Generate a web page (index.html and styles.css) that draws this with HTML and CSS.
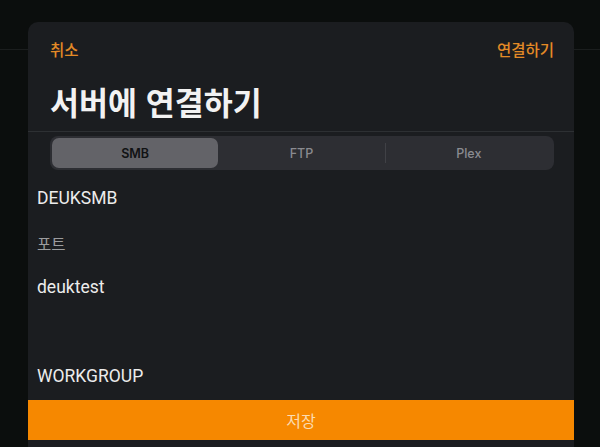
FILE: index.html
```html
<!DOCTYPE html>
<html lang="ko">
<head>
<meta charset="utf-8">
<link rel="stylesheet" href="styles.css">
</head>
<body>
<div class="page-bar"></div>
<div class="modal">
  <div class="top-row">
    <span class="link">취소</span>
    <span class="link">연결하기</span>
  </div>
  <h1 class="title">서버에 연결하기</h1>
  <div class="divider"></div>
  <div class="segments">
    <div class="seg active">SMB</div>
    <div class="seg">FTP</div>
    <div class="sep"></div>
    <div class="seg">Plex</div>
  </div>
  <div class="fields">
    <div class="field">DEUKSMB</div>
    <div class="field placeholder">포트</div>
    <div class="field">deuktest</div>
    <div class="field"></div>
    <div class="field">WORKGROUP</div>
  </div>
  <div class="save">저장</div>
</div>
</body>
</html>
```
FILE: styles.css
```css
* { box-sizing: border-box; }
html, body { margin: 0; padding: 0; }
body {
  width: 600px;
  height: 447px;
  overflow: hidden;
  background: #0b0e0d;
  font-family: "Liberation Sans", "Noto Sans CJK KR", sans-serif;
  position: relative;
}
.page-bar {
  height: 50px;
  border-bottom: 1px solid #1b1e1e;
}
.modal {
  position: absolute;
  left: 28px;
  top: 22px;
  width: 546px;
  height: 440px;
  background: #1b1d20;
  border-radius: 10px 10px 0 0;
  display: flex;
  flex-direction: column;
}
.top-row {
  display: flex;
  justify-content: space-between;
  padding: 17px 20px 0 22px;
  height: 38px;
}
.link {
  font-family: "Noto Sans CJK KR", sans-serif;
  color: #e38a26;
  font-size: 15.5px;
  font-weight: 500;
  line-height: 20px;
}
.title {
  margin: 0;
  padding: 21px 22px 0 22px;
  font-family: "Noto Sans CJK KR", sans-serif;
  font-weight: 700;
  font-size: 31.5px;
  line-height: 40px;
  color: #f2f2f2;
  height: 64px;
  white-space: nowrap;
}
.divider {
  height: 1px;
  background: #2d3033;
  margin-top: 7px;
}
.segments {
  margin: 4px 20px 0 22px;
  height: 34px;
  background: #2d2e33;
  border-radius: 8px;
  display: flex;
  align-items: center;
  padding: 2px;
}
.seg {
  flex: 1;
  height: 30px;
  display: flex;
  align-items: center;
  justify-content: center;
  font-family: "Inter", "Liberation Sans", sans-serif;
  font-size: 12.5px;
  font-weight: 500;
  color: #8a8b90;
}
.seg.active {
  background: #636368;
  border-radius: 7px;
  color: #111214;
  font-weight: 600;
}
.sep {
  width: 1px;
  height: 20px;
  background: #404146;
}
.fields {
  padding: 6px 0 0 9px;
  display: flex;
  flex-direction: column;
}
.field {
  height: 44.5px;
  display: flex;
  align-items: center;
  font-size: 17.5px;
  color: #ececec;
  font-family: "Roboto", "Noto Sans CJK KR", sans-serif;
}
.field.placeholder {
  color: #9b9c9e;
  font-size: 15.5px;
  font-family: "Noto Sans CJK KR", sans-serif;
}
.save {
  margin-top: 1px;
  height: 40px;
  background: #f68800;
  display: flex;
  align-items: center;
  justify-content: center;
  font-family: "Noto Sans CJK KR", sans-serif;
  font-size: 16px;
  color: #fbdcb2;
}
```
